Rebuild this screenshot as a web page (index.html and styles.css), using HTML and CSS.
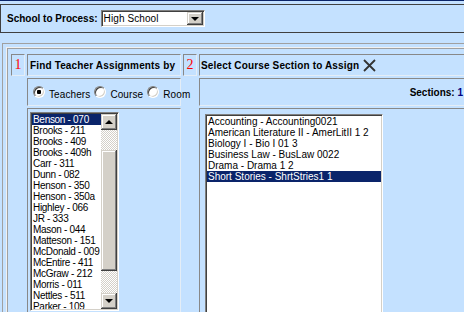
FILE: index.html
```html
<!DOCTYPE html>
<html lang="en">
<head>
  <meta charset="UTF-8">
  <title>Teacher Assignments</title>
  <link rel="stylesheet" href="styles.css">
</head>
<body>
  <div class="topline"></div>
  <div class="topbar">
    <span class="label">School to Process:</span>
    <div class="combo">
      <span class="combo-text">High School</span>
      <span class="btn"><span class="arrow down"></span></span>
    </div>
  </div>

  <div class="panel">
    <div class="frame">
      <div class="grid">
        <div class="cell step">1</div>
        <div class="cell head">Find Teacher Assignments by</div>
        <div class="cell step">2</div>
        <div class="cell head head-wide">
          Select Course Section to Assign
          <svg class="close" width="13" height="13" viewBox="0 0 13 13">
            <path d="M1 1 L12 12 M12 1 L1 12" stroke="#333" stroke-width="1.8" fill="none"/>
          </svg>
        </div>

        <div class="cell radios">
          <label class="opt"><input type="radio" name="by" checked><span>Teachers</span></label>
          <label class="opt"><input type="radio" name="by"><span>Course</span></label>
          <label class="opt"><input type="radio" name="by"><span>Room</span></label>
        </div>
        <div class="cell sections">Sections:&nbsp;<span class="count">1</span></div>

        <div class="cell list-cell">
          <div class="listbox teachers">
            <ul class="items">
              <li class="selected">Benson - 070</li>
              <li>Brooks - 211</li>
              <li>Brooks - 409</li>
              <li>Brooks - 409h</li>
              <li>Carr - 311</li>
              <li>Dunn - 082</li>
              <li>Henson - 350</li>
              <li>Henson - 350a</li>
              <li>Highley - 066</li>
              <li>JR - 333</li>
              <li>Mason - 044</li>
              <li>Matteson - 151</li>
              <li>McDonald - 009</li>
              <li>McEntire - 411</li>
              <li>McGraw - 212</li>
              <li>Morris - 011</li>
              <li>Nettles - 511</li>
              <li>Parker - 109</li>
            </ul>
            <div class="scrollbar">
              <span class="btn sb-btn"><span class="arrow up"></span></span>
              <span class="track track-top"></span>
              <span class="thumb"></span>
              <span class="track track-bottom"></span>
              <span class="btn sb-btn"><span class="arrow down"></span></span>
            </div>
          </div>
        </div>
        <div class="cell list-cell wide">
          <div class="listbox courses">
            <ul class="items">
              <li>Accounting - Accounting0021</li>
              <li>American Literature II - AmerLitII 1 2</li>
              <li>Biology I - Bio I 01 3</li>
              <li>Business Law - BusLaw 0022</li>
              <li>Drama - Drama 1 2</li>
              <li class="selected">Short Stories - ShrtStries1 1</li>
            </ul>
          </div>
        </div>
      </div>
    </div>
  </div>
</body>
</html>
```

FILE: styles.css
```css
body { margin: 0; overflow: hidden; background: #c4e1ff; font-family: "Liberation Sans", Arial, sans-serif; font-size: 10px; color: #000; }

/* school picker bar */
.topline { height: 1px; background: #0a246a; }
.topbar { display: flex; align-items: center; height: 27px; margin: 3px -2px 0 0; padding-left: 6px; border: 1px solid #404040; }
.label { font-weight: bold; margin-right: 3px; }
.combo { display: flex; width: 100px; height: 13px; border: 1px solid; border-color: #808080 #fff #fff #808080; padding: 1px; background: #fff; box-shadow: inset 1px 1px #404040, inset -1px -1px #d4d0c8; }
.combo-text { flex: 1; padding-left: 1px; line-height: 13px; letter-spacing: 0.1px; }
.combo .btn { width: 16px; height: 13px; }

/* classic 3d button + arrows */
.btn { display: flex; align-items: center; justify-content: center; box-sizing: border-box; background: #d4d0c8;
  box-shadow: inset -1px -1px #404040, inset 1px 1px #d4d0c8, inset -2px -2px #808080, inset 2px 2px #fff; }
.arrow { width: 0; height: 0; border-left: 4px solid transparent; border-right: 4px solid transparent; }
.arrow.down { border-top: 4px solid #000; }
.arrow.up { border-bottom: 4px solid #000; }

/* main panel */
.panel { margin: 10px 0 0 2px; padding: 3px 0 0 3px; border-top: 1px solid #a0a0a0; border-left: 1px solid #a0a0a0; }
.frame { padding: 6px 0 0 4px; border-top: 1px solid #f0f0f0; border-left: 1px solid #f0f0f0; box-shadow: inset 1px 1px #a0a0a0; }
.grid { display: grid; grid-template-columns: 14px 154px 14px 267px; grid-template-rows: 22px 28px 220px; gap: 2px; }
.cell { box-sizing: border-box; border: 1px solid; border-color: #888 #e4edf6 #e4edf6 #888; }

.step { display: flex; align-items: center; justify-content: center; color: #f00; font-family: "Liberation Serif", "Times New Roman", serif; font-size: 14px; }
.head { display: flex; align-items: center; padding-left: 2px; font-weight: bold; white-space: nowrap; letter-spacing: 0.15px; }
.head-wide { padding-left: 1px; }
.close { margin-left: 4px; }

.radios { grid-column: 2; display: flex; align-items: center; padding-left: 5px; }
.opt { display: flex; align-items: center; margin-right: 4px; letter-spacing: 0.1px; }
.opt span { padding-top: 4px; }
.opt input { appearance: none; box-sizing: border-box; width: 12px; height: 12px; margin: 0 4px 0 0; border-radius: 50%; border: 1px solid; border-color: #808080 #fff #fff #808080; background: #fff; box-shadow: inset 1px 1px #404040, inset -1px -1px #d4d0c8; }
.opt input:checked { background: radial-gradient(circle, #000 0 2px, #fff 2.5px); }

.sections { grid-column: 4; display: flex; align-items: center; justify-content: flex-end; padding-right: 2px; font-weight: bold; }
.count { color: #000080; }

/* list boxes */
.list-cell { grid-column: 2; padding: 3px 0 0 2px; }
.list-cell.wide { grid-column: 4; padding: 5px 0 0 5px; }
.listbox { display: flex; box-sizing: border-box; border: 1px solid; border-color: #808080 #fff #fff #808080; padding: 1px; background: #fff; box-shadow: inset 1px 1px #404040, inset -1px -1px #d4d0c8; }
.teachers { width: 89px; height: 199px; }
.courses { width: 178px; height: 220px; }
.items { flex: 1; margin: 0; padding: 0; list-style: none; overflow: hidden; }
.items li { height: 11px; line-height: 11px; padding-left: 1px; white-space: nowrap; }
.teachers .items li { letter-spacing: -0.3px; }
.items li.selected { background: #0a246a; color: #fff; }

.scrollbar { display: flex; flex-direction: column; width: 16px; }
.sb-btn { height: 16px; flex: none; }
.track { background: repeating-conic-gradient(#d4d0c8 0 25%, #fff 0 50%) 0 0 / 2px 2px; }
.track-top { height: 20px; }
.track-bottom { flex: 1; }
.thumb { height: 121px; background: #d4d0c8; box-shadow: inset -1px -1px #404040, inset 1px 1px #d4d0c8, inset -2px -2px #808080, inset 2px 2px #fff; }
```
